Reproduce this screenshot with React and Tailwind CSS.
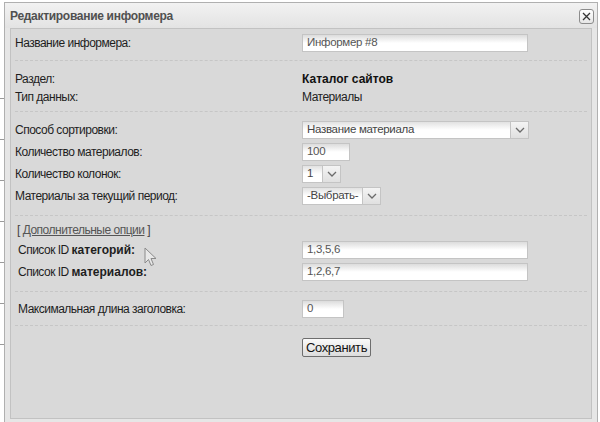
import React from "react";

const font = { fontFamily: '"Liberation Sans", Arial, sans-serif' };

function Sep({ className = "" }) {
  return <div className={"h-0 border-t border-dashed border-[#c6c6c6] mr-[3px] " + className} />;
}

function TextInput({ value, w, className = "" }) {
  return (
    <div
      className={
        "h-[18px] border border-[#c4c4c4] bg-gradient-to-b from-[#dcdcdc] via-white to-white flex items-center pl-[4px] text-[11.5px] tracking-[-0.3px] text-[#555] " +
        w +
        " " +
        className
      }
    >
      {value}
    </div>
  );
}

function Chevron() {
  return (
    <svg width="10" height="6" viewBox="0 0 10 6" fill="none">
      <path d="M1 1 L5 5 L9 1" stroke="#6b6b6b" strokeWidth="1.3" />
    </svg>
  );
}

function Select({ value, w }) {
  return (
    <div className={"h-[18px] flex " + w}>
      <div className="flex-1 border border-[#c4c4c4] bg-gradient-to-b from-[#e2e2e2] via-white to-white flex items-center pl-[4px] text-[11.5px] tracking-[-0.3px] text-[#444] overflow-hidden whitespace-nowrap">
        {value}
      </div>
      <div className="w-[18px] border border-l-0 border-[#c4c4c4] bg-gradient-to-b from-[#f4f4f4] to-[#e0e0e0] flex items-center justify-center">
        <Chevron />
      </div>
    </div>
  );
}

function Row({ label, children, className = "", labelClass = "" }) {
  return (
    <div className={"flex items-center h-[18px] " + className}>
      <div className={"w-[287px] shrink-0 text-[12px] tracking-[-0.5px] text-[#1e1e1e] " + labelClass}>{label}</div>
      {children}
    </div>
  );
}

export default function App() {
  return (
    <div className="w-[600px] h-[422px] bg-white overflow-hidden relative flex" style={font}>
      {/* background page strip */}
      <div className="w-[4px] shrink-0 flex flex-col bg-white pt-[2px]">
        <div className="h-[96px]" />
        <div className="h-px bg-[#9a9a9a]" />
        <div className="h-[40px]" />
        <div className="h-px bg-[#9a9a9a]" />
        <div className="h-[40px]" />
        <div className="h-px bg-[#9a9a9a]" />
        <div className="h-[40px]" />
        <div className="h-px bg-[#9a9a9a]" />
        <div className="h-[40px]" />
        <div className="h-px bg-[#9a9a9a]" />
        <div className="h-[40px]" />
        <div className="h-px bg-[#9a9a9a]" />
        <div className="h-[40px]" />
        <div className="h-px bg-[#9a9a9a]" />
      </div>

      {/* dialog */}
      <div className="mt-[2px] w-[594px] h-[424px] shrink-0 border border-[#b0b0b0] bg-[#e6e6e6] flex flex-col">
        {/* title bar */}
        <div className="h-[25px] shrink-0 flex items-center justify-between pl-[5px] pr-[3px] bg-gradient-to-b from-[#f2f2f2] to-[#e3e3e3]">
          <span className="text-[12px] font-bold text-[#505050] tracking-[-0.3px]">Редактирование информера</span>
          <div className="w-[15px] h-[15px] mt-[1px] border border-[#8c8c8c] rounded-[3px] bg-gradient-to-b from-white to-[#e6e6e6] flex items-center justify-center">
            <svg width="9" height="9" viewBox="0 0 9 9">
              <path d="M1 1 L8 8 M8 1 L1 8" stroke="#333" strokeWidth="1.3" />
            </svg>
          </div>
        </div>

        {/* panel */}
        <div className="ml-[5px] w-[582px] h-[391px] border border-[#c2c2c2] bg-[#d9d9d9] pl-[4px] pr-[1px]">
          <Row label="Название информера:" className="mt-[5px]">
            <TextInput value="Информер #8" w="w-[226px]" />
          </Row>
          <Sep className="mt-[8px]" />

          <Row label="Раздел:" className="mt-[9px] h-[16px]">
            <span className="text-[12px] font-bold text-[#111]">Каталог сайтов</span>
          </Row>
          <Row label="Тип данных:" className="h-[16px]">
            <span className="text-[12px] tracking-[-0.5px] text-[#222]">Материалы</span>
          </Row>
          <Sep className="mt-[5px]" />

          <Row label="Способ сортировки:" className="mt-[9px]">
            <Select value="Название материала" w="w-[227px]" />
          </Row>
          <Row label="Количество материалов:" className="mt-[4px]">
            <TextInput value="100" w="w-[48px]" />
          </Row>
          <Row label="Количество колонок:" className="mt-[4px]">
            <Select value="1" w="w-[39px]" />
          </Row>
          <Row label="Материалы за текущий период:" className="mt-[4px]">
            <Select value="-Выбрать-" w="w-[79px]" />
          </Row>
          <Sep className="mt-[10px]" />

          <div className="mt-[6px] h-[16px] flex items-center pl-[2px] text-[12px] tracking-[-0.5px] text-[#444]">
            <span>[&nbsp;</span>
            <span className="underline text-[#555]">Дополнительные опции</span>
            <span>&nbsp;]</span>
          </div>
          <Row
            label={
              <>
                Список ID <b className="tracking-normal">категорий:</b>
              </>
            }
            labelClass="pl-[3px]"
            className="mt-[3px]"
          >
            <TextInput value="1,3,5,6" w="w-[226px]" />
          </Row>
          <Row
            label={
              <>
                Список ID <b className="tracking-normal">материалов:</b>
              </>
            }
            labelClass="pl-[3px]"
            className="mt-[4px]"
          >
            <TextInput value="1,2,6,7" w="w-[226px]" />
          </Row>
          <Sep className="mt-[10px]" />

          <Row label="Максимальная длина заголовка:" labelClass="pl-[3px]" className="mt-[8px]">
            <TextInput value="0" w="w-[42px]" />
          </Row>
          <Sep className="mt-[7px]" />

          <div className="mt-[12px] flex">
            <div className="w-[287px] shrink-0" />
            <div className="h-[19px] px-[3px] border border-[#6e6e6e] rounded-[2px] bg-gradient-to-b from-[#fafafa] to-[#dcdcdc] flex items-center text-[13px] tracking-[-0.4px] text-[#111]">
              Сохранить
            </div>
          </div>
        </div>
      </div>

      {/* mouse cursor */}
      <svg className="absolute left-[144px] top-[247px]" width="14" height="20" viewBox="0 0 14 20">
        <path
          d="M1 1 L1 16 L4.5 12.5 L7 18.5 L9.5 17.5 L7 11.5 L12 11.5 Z"
          fill="#e8e8e8"
          stroke="#8a8a8a"
          strokeWidth="1"
        />
      </svg>
    </div>
  );
}
